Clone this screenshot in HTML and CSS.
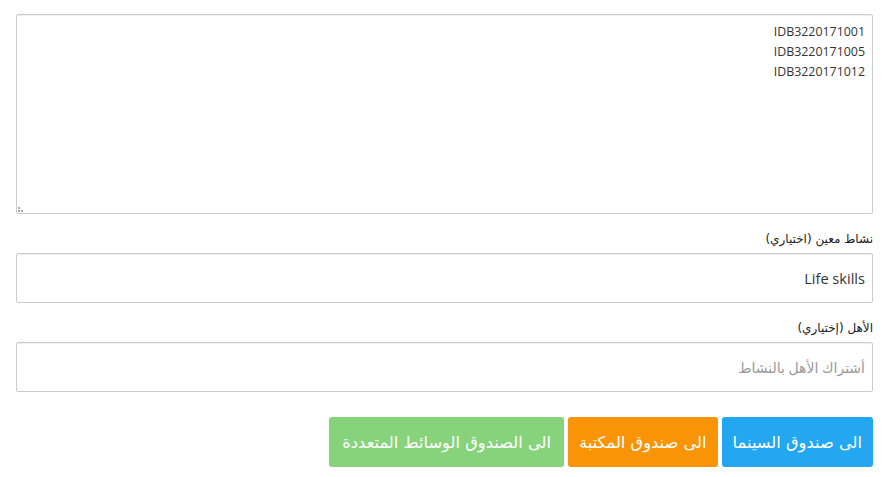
FILE: index.html
```html
<!DOCTYPE html>
<html lang="ar" dir="rtl">
<head>
<meta charset="utf-8">
<link rel="stylesheet" href="styles.css">
</head>
<body>
<div class="page">
  <div class="group">
    <div class="area-wrap">
      <textarea class="control area" dir="rtl">IDB3220171001
IDB3220171005
IDB3220171012</textarea>
    </div>
  </div>
  <div class="group">
    <label class="lbl">نشاط معين (اختياري)</label>
    <input class="control field" type="text" value="Life skills">
  </div>
  <div class="group">
    <label class="lbl">الأهل (إختياري)</label>
    <input class="control field" type="text" placeholder="أشتراك الأهل بالنشاط">
  </div>
  <div class="actions">
    <button class="btn blue">الى صندوق السينما</button>
    <button class="btn orange">الى صندوق المكتبة</button>
    <button class="btn green">الى الصندوق الوسائط المتعددة</button>
  </div>
</div>
</body>
</html>
```
FILE: styles.css
```css
html, body {
  margin: 0;
  padding: 0;
  background: #fff;
}
body {
  font-family: "Open Sans", "DejaVu Sans", sans-serif;
  color: #333;
}
.page {
  padding: 14px 14px 0 16px;
}
.group {
  margin-bottom: 15px;
  display: flex;
  flex-direction: column;
}
.area-wrap {
  position: relative;
}
.area-wrap::after {
  content: "";
  position: absolute;
  left: 2px;
  bottom: 2px;
  width: 5px;
  height: 5px;
  background:
    radial-gradient(circle, #aaa 0.9px, transparent 1px) 0 3px / 2px 2px no-repeat,
    radial-gradient(circle, #aaa 0.9px, transparent 1px) 3px 3px / 2px 2px no-repeat,
    radial-gradient(circle, #aaa 0.9px, transparent 1px) 0 0 / 2px 2px no-repeat;
  pointer-events: none;
}
.lbl {
  display: block;
  font-family: "DejaVu Sans", sans-serif;
  font-size: 12px;
  line-height: 20px;
  margin-bottom: 4px;
  color: #222;
}
.control {
  display: block;
  box-sizing: border-box;
  width: 100%;
  border: 1px solid #ccc;
  border-radius: 2px;
  box-shadow: inset 0 1px 1px rgba(0,0,0,.075);
  background: #fff;
  font-family: "Open Sans", "DejaVu Sans", sans-serif;
  color: #333;
  margin: 0;
  outline: none;
}
.area {
  height: 200px;
  padding: 7px 7px;
  font-size: 12.4px;
  line-height: 20px;
  resize: none;
  text-align: right;
}
.field {
  height: 50px;
  padding: 0 7px;
  font-size: 14.6px;
  text-align: right;
}
.field::placeholder {
  color: #999;
  font-size: 14px;
}
.actions {
  margin-top: 25px;
  display: flex;
  flex-direction: row;
  gap: 4px;
}
.btn {
  height: 50px;
  border: none;
  border-radius: 3px;
  color: #fff;
  font-family: "DejaVu Sans", sans-serif;
  font-size: 16.3px;
  padding: 0 11px;
  cursor: pointer;
}
.blue { background: #22a7f0; }
.orange { background: #f89406; }
.green { background: #87d37c; padding: 0 13px; }
```
